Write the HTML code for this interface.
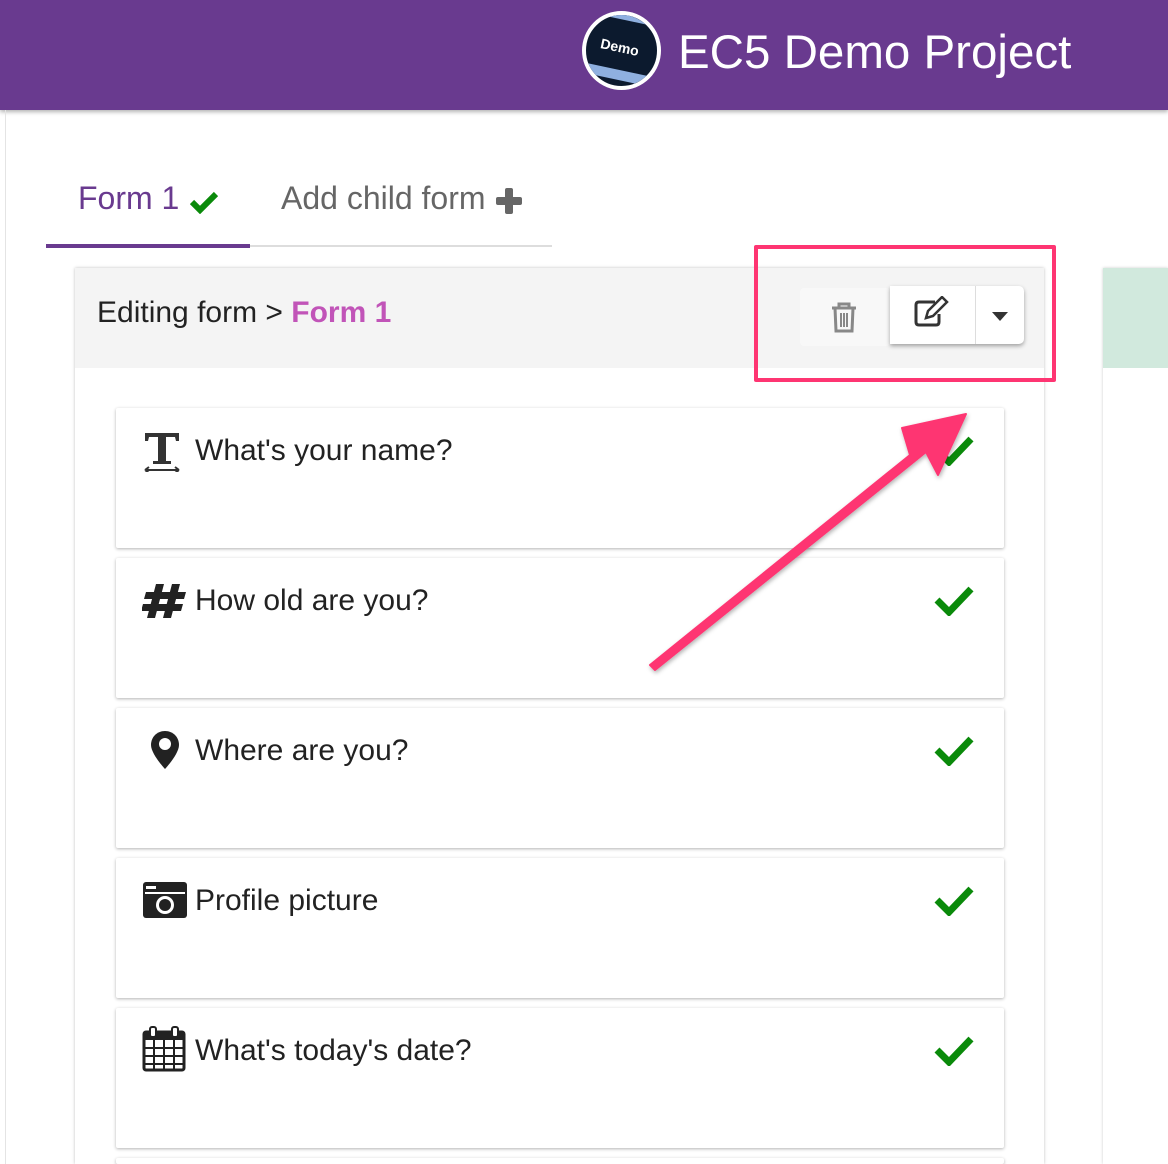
<!DOCTYPE html>
<html style="width:1168px;height:1164px;overflow:hidden"><head><style>
*{margin:0;padding:0;box-sizing:border-box}
body{width:1168px;height:1164px;overflow:hidden;background:#fff;font-family:"Liberation Sans",sans-serif;position:relative}
.hdr{position:absolute;left:0;top:0;width:1168px;height:110px;background:#693a8f;box-shadow:0 2px 4px rgba(0,0,0,.3)}
.title{position:absolute;left:678px;top:25px;color:#fff;font-size:47.5px}
.logo{position:absolute;left:582px;top:11px;width:79px;height:79px;border-radius:50%;border:4px solid #fff;background:#0c1a2e;overflow:hidden}
.side{position:absolute;left:5px;top:110px;width:1px;height:1054px;background:#e4e4e4}
.tab{position:absolute;top:180px;font-size:32px}
.panel{position:absolute;left:75px;top:268px;width:969px;height:896px;background:#fff;box-shadow:0 0 3px rgba(0,0,0,.25)}
.ph{position:absolute;left:0;top:0;width:969px;height:100px;background:#f4f4f4}
.card{position:absolute;left:116px;width:888px;height:140px;background:#fff;box-shadow:0 1px 3px rgba(0,0,0,.3);border-radius:2px}
.card span{position:absolute;left:79px;top:26px;font-size:30px;color:#222}
.card .ic{position:absolute;left:26px;top:22px}
.card .ck{position:absolute;left:818px;top:26px}
</style></head><body>
<div class="hdr">
<div class="logo"><svg width="79" height="79" viewBox="0 0 79 79"><rect x="-10" y="-4" width="110" height="10" fill="#8fb0e0" transform="rotate(12 40 40)"/><rect x="-10" y="56" width="110" height="10" fill="#8fb0e0" transform="rotate(12 40 40)"/><text x="14" y="38" fill="#fff" font-size="14" font-weight="bold" font-family="Liberation Sans" transform="rotate(12 38 34)">Demo</text></svg></div>
<div class="title">EC5 Demo Project</div>
</div>
<div class="side"></div>
<div class="tab" style="left:78px;color:#693a8f">Form 1</div>
<svg style="position:absolute;left:190px;top:190px" width="28" height="24" viewBox="0 0 28 24"><path d="M2 12 L10 20 L26 4" stroke="#0a8a0a" stroke-width="6" fill="none"/></svg>
<div class="tab" style="left:281px;color:#666">Add child form</div>
<svg style="position:absolute;left:496px;top:188px" width="26" height="26"><rect x="9" y="0" width="8" height="26" rx="2" fill="#666"/><rect x="0" y="9" width="26" height="8" rx="2" fill="#666"/></svg>
<div style="position:absolute;left:46px;top:244px;width:204px;height:4px;background:#693a8f"></div>
<div style="position:absolute;left:250px;top:245px;width:302px;height:2px;background:#ddd"></div>
<div style="position:absolute;left:1103px;top:268px;width:65px;height:896px;background:#fff;box-shadow:0 0 3px rgba(0,0,0,.2)"><div style="height:100px;background:#d1e9dd"></div></div>
<div class="panel"><div class="ph">
<div style="position:absolute;left:22px;top:28px;font-size:30px;color:#222">Editing form &gt; <span style="color:#c154b8;font-weight:bold">Form 1</span></div>
<div style="position:absolute;left:725px;top:20px;width:90px;height:58px;background:#f8f8f8;border-radius:4px"></div>
<svg style="position:absolute;left:754px;top:32px" width="30" height="34" viewBox="0 0 30 34"><path d="M3 8h24M10 8V4h10v4M6 8l1 23h16l1-23" stroke="#888" stroke-width="3" fill="none"/><path d="M12 13v14M15 13v14M18 13v14" stroke="#888" stroke-width="2"/></svg>
<div style="position:absolute;left:815px;top:18px;width:134px;height:58px;background:#fff;border-radius:0 5px 5px 0;box-shadow:0 2px 4px rgba(0,0,0,.35)"><div style="position:absolute;left:85px;top:0;width:1px;height:58px;background:#ddd"></div></div>
<svg style="position:absolute;left:838px;top:28px" width="38" height="32" viewBox="0 0 38 32"><path d="M22 6H6Q3 6 3 9V26Q3 29 6 29H23Q26 29 26 26V18" stroke="#333" stroke-width="3" fill="none"/><path d="M13 22l2-7 14-14 5 5-14 14z" stroke="#333" stroke-width="2.5" fill="none"/></svg>
<svg style="position:absolute;left:917px;top:44px" width="16" height="9"><path d="M0 0h16L8 9z" fill="#333"/></svg>
</div></div>
<div style="position:absolute;left:754px;top:245px;width:302px;height:137px;border:4px solid #fe3572;border-radius:2px"></div>

<div class="card" style="top:408px"><svg class="ic" width="42" height="42" viewBox="0 0 42 42"><path d="M3 3h34v8h-3l-1-4H24v24h5v3H11v-3h5V7H7l-1 4H3z" fill="#333"/><path d="M3 40h34M3 40l4-3M3 40l4 3M37 40l-4-3M37 40l-4 3" stroke="#333" stroke-width="2"/></svg><span>What's your name?</span><svg class="ck" width="40" height="32"><path d="M3 16 L15 28 L37 5" stroke="#0a8a0a" stroke-width="7" fill="none"/></svg></div>
<div class="card" style="top:558px"><svg class="ic" style="top:24px" width="46" height="38" viewBox="0 0 46 38"><path d="M14 2h8l-9 34H5zM30 2h8l-9 34h-8zM4 10h40l-2 7H2zM1 22h40l-2 7H-1z" fill="#222"/></svg><span>How old are you?</span><svg class="ck" width="40" height="32"><path d="M3 16 L15 28 L37 5" stroke="#0a8a0a" stroke-width="7" fill="none"/></svg></div>
<div class="card" style="top:708px"><svg class="ic" style="left:34px" width="30" height="40" viewBox="0 0 30 40"><path d="M15 1C7 1 1 7 1 15c0 9 14 24 14 24s14-15 14-24C29 7 23 1 15 1z" fill="#222"/><circle cx="15" cy="14" r="6" fill="#fff"/></svg><span>Where are you?</span><svg class="ck" width="40" height="32"><path d="M3 16 L15 28 L37 5" stroke="#0a8a0a" stroke-width="7" fill="none"/></svg></div>
<div class="card" style="top:858px"><svg class="ic" style="top:22px" width="46" height="40" viewBox="0 0 46 40"><rect x="1" y="2" width="44" height="36" rx="3" fill="#222"/><rect x="4" y="6" width="10" height="3" fill="#fff"/><rect x="3" y="12" width="40" height="2" fill="#fff"/><circle cx="23" cy="25" r="9" fill="#fff"/><circle cx="23" cy="25" r="6" fill="#222"/></svg><span>Profile picture</span><svg class="ck" width="40" height="32"><path d="M3 16 L15 28 L37 5" stroke="#0a8a0a" stroke-width="7" fill="none"/></svg></div>
<div class="card" style="top:1008px"><svg class="ic" style="top:18px" width="44" height="46" viewBox="0 0 44 46"><rect x="2" y="6" width="40" height="38" rx="2" fill="none" stroke="#222" stroke-width="3"/><rect x="2" y="6" width="40" height="8" fill="#222"/><path d="M2 22h40M2 30h40M2 38h40M12 14v30M22 14v30M32 14v30" stroke="#222" stroke-width="2"/><rect x="8" y="1" width="6" height="10" rx="2" fill="#fff" stroke="#222" stroke-width="2"/><rect x="30" y="1" width="6" height="10" rx="2" fill="#fff" stroke="#222" stroke-width="2"/></svg><span>What's today's date?</span><svg class="ck" width="40" height="32"><path d="M3 16 L15 28 L37 5" stroke="#0a8a0a" stroke-width="7" fill="none"/></svg></div>
<div class="card" style="top:1158px;height:6px"></div>

<svg style="position:absolute;left:0;top:0" width="1168" height="1164"><defs><filter id="s"><feDropShadow dx="1" dy="2" stdDeviation="2" flood-opacity=".3"/></filter></defs>
<path d="M650 665 L910 455 L902 428 L966 414 L938 475 L926 452 L655 670 Z" fill="#fe3572" stroke="#fe3572" stroke-width="2" stroke-linejoin="round" filter="url(#s)"/></svg>
</body></html>
